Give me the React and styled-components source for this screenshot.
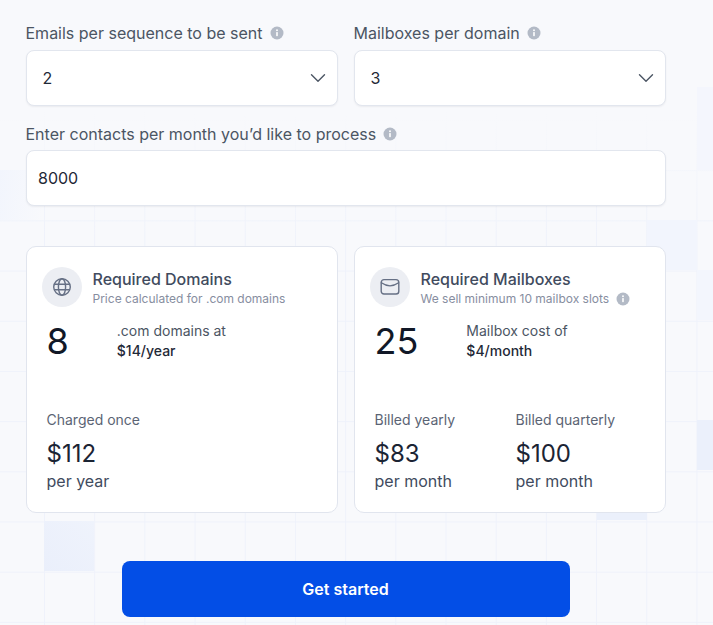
import React from "react";
import styled, { createGlobalStyle } from "styled-components";

const Global = createGlobalStyle`
  html, body { margin: 0; padding: 0; }
  body { font-family: Inter, "Liberation Sans", sans-serif; background: #f8f9fc; }
  * { box-sizing: border-box; }
`;

const cell = (x, y, color) =>
  `linear-gradient(${color}, ${color}) ${x}px ${y}px / 50px 50px no-repeat`;

const Page = styled.main`
  width: 713px;
  height: 625px;
  overflow: hidden;
  padding: 21px 47px 0 25.5px;
  display: flex;
  flex-direction: column;
  background:
    linear-gradient(100deg, #f2f5fd, #f8f9fc 95%) 0 170px / 44px 50px no-repeat,
    linear-gradient(45deg, #eaeffb, #eff3fc) 44px 521px / 50px 50px no-repeat,
    ${cell(647, 220, "#f2f5fd")},
    linear-gradient(#f3f6fd, #f3f6fd) 697px 270px / 16px 50px no-repeat,
    linear-gradient(#f4f6fd, #f4f6fd) 697px 87px / 16px 83px no-repeat,
    linear-gradient(#ebf0fb, #ebf0fb) 697px 420px / 16px 50px no-repeat,
    ${cell(597, 470, "#ebf0fb")},
    linear-gradient(#f8f9fc 110px, rgba(248, 249, 252, 0) 240px) 0 0 / 100% 240px no-repeat,
    linear-gradient(90deg, #eff2fb 1px, transparent 1px) 44px 120px / 50.2px 50.2px,
    linear-gradient(#eff2fb 1px, transparent 1px) 0 120px / 50.2px 50.2px,
    #f8f9fc;
`;

const FieldRow = styled.div`
  display: grid;
  grid-template-columns: 312px 312px;
  column-gap: 16px;
`;

const Field = styled.div`
  display: flex;
  flex-direction: column;
  margin-top: ${(p) => p.$top || 0}px;
`;

const Label = styled.label`
  display: flex;
  align-items: center;
  gap: 7px;
  height: 24px;
  margin-bottom: ${(p) => p.$gap || 4}px;
  font-size: 16px;
  line-height: 24px;
  color: #4b5563;
`;

const Info = styled.svg`
  width: 14px;
  height: 14px;
  flex: none;
  color: #b3bac6;
`;

const InfoIcon = () => (
  <Info viewBox="0 0 14 14" aria-hidden="true">
    <circle cx="7" cy="7" r="6.5" fill="currentColor" />
    <rect x="6.2" y="6" width="1.6" height="4.2" rx="0.6" fill="#fff" />
    <circle cx="7" cy="4.2" r="0.95" fill="#fff" />
  </Info>
);

const Control = styled.div`
  display: flex;
  align-items: center;
  justify-content: space-between;
  height: 56px;
  width: ${(p) => p.$width || "auto"};
  padding: 0 11px 0 ${(p) => p.$pad}px;
  background: #fff;
  border: 1px solid #e2e6ee;
  border-radius: 8px;
  box-shadow: 0 1px 2px rgba(16, 24, 40, 0.06);
  font-size: 16px;
  color: #1f2937;
`;

const Chevron = styled.svg`
  width: 16px;
  height: 16px;
  color: #4b5563;
`;

const ChevronIcon = () => (
  <Chevron viewBox="0 0 16 16" fill="none" aria-hidden="true">
    <path d="M1.5 4.8L8 11.2L14.5 4.8" stroke="currentColor" strokeWidth="1.4" strokeLinecap="round" strokeLinejoin="round" />
  </Chevron>
);

const Cards = styled.section`
  display: grid;
  grid-template-columns: 312px 312px;
  column-gap: 16px;
  margin-top: 40px;
`;

const Card = styled.article`
  display: flex;
  flex-direction: column;
  height: 267px;
  padding: 20px 19px 19px 15px;
  background: #fff;
  border: 1px solid #e1e5ee;
  border-radius: 10px;
`;

const CardHead = styled.div`
  display: flex;
  align-items: center;
  gap: 11px;
`;

const IconCircle = styled.div`
  width: 40px;
  height: 40px;
  flex: none;
  display: flex;
  align-items: center;
  justify-content: center;
  border-radius: 50%;
  background: #eceef3;
  color: #667085;
`;

const TitleBlock = styled.div`
  display: flex;
  flex-direction: column;
`;

const Title = styled.h3`
  margin: 0;
  font-size: 16px;
  font-weight: 500;
  line-height: 24px;
  color: #414b5e;
`;

const Sub = styled.p`
  display: flex;
  align-items: center;
  gap: 7px;
  margin: 0;
  font-size: 12px;
  line-height: 16px;
  color: #878e9f;
`;

const Quantity = styled.div`
  display: flex;
  align-items: center;
  gap: 48px;
  margin: 14px 0 0 5px;
`;

const Big = styled.div`
  font-size: 36px;
  line-height: 40px;
  color: #111827;
`;

const Rate = styled.div`
  font-size: 14px;
  line-height: 20px;
  color: #4b5563;
`;

const RateValue = styled.div`
  font-weight: 500;
  color: #1f2937;
`;

const Prices = styled.div`
  display: grid;
  grid-template-columns: 129px 129px;
  column-gap: 12px;
  margin-top: auto;
  padding-left: 5px;
`;

const Price = styled.div`
  display: flex;
  flex-direction: column;
`;

const PriceLabel = styled.div`
  font-size: 14px;
  line-height: 20px;
  color: #5b6474;
`;

const Amount = styled.div`
  margin-top: 9px;
  font-size: 24px;
  line-height: 30px;
  color: #1b2434;
`;

const Per = styled.div`
  font-size: 16px;
  line-height: 24px;
  color: #414b5e;
`;

const CTA = styled.button`
  align-self: flex-start;
  width: 448px;
  height: 56px;
  margin: 48px 0 0 96px;
  border: 0;
  border-radius: 8px;
  background: #034ee6;
  color: #fff;
  font: 600 16px Inter, sans-serif;
`;

const GlobeIcon = () => (
  <svg width="20" height="20" viewBox="0 0 20 20" fill="none" stroke="currentColor" strokeWidth="1.4" aria-hidden="true">
    <circle cx="10" cy="10" r="8.3" />
    <ellipse cx="10" cy="10" rx="3.6" ry="8.3" />
    <path d="M2.2 7.3H17.8M2.2 12.7H17.8" />
  </svg>
);

const MailIcon = () => (
  <svg width="20" height="20" viewBox="0 0 20 20" fill="none" stroke="currentColor" strokeWidth="1.4" aria-hidden="true">
    <rect x="1.2" y="2.6" width="17.6" height="14.4" rx="2.8" />
    <path d="M1.4 5.8C4.4 7.9 7.2 8.9 10 8.9C12.8 8.9 15.6 7.9 18.6 5.8" strokeLinecap="round" />
  </svg>
);

export default function App() {
  return (
    <>
      <Global />
      <Page>
        <FieldRow>
          <Field>
            <Label $gap={5}>Emails per sequence to be sent <InfoIcon /></Label>
            <Control $pad={16}>2<ChevronIcon /></Control>
          </Field>
          <Field>
            <Label $gap={5}>Mailboxes per domain <InfoIcon /></Label>
            <Control $pad={16}>3<ChevronIcon /></Control>
          </Field>
        </FieldRow>
        <Field $top={16}>
          <Label>Enter contacts per month you’d like to process <InfoIcon /></Label>
          <Control $pad={11.5} $width="640px">8000</Control>
        </Field>
        <Cards>
          <Card>
            <CardHead>
              <IconCircle><GlobeIcon /></IconCircle>
              <TitleBlock>
                <Title>Required Domains</Title>
                <Sub>Price calculated for .com domains</Sub>
              </TitleBlock>
            </CardHead>
            <Quantity>
              <Big>8</Big>
              <Rate>.com domains at<RateValue>$14/year</RateValue></Rate>
            </Quantity>
            <Prices>
              <Price>
                <PriceLabel>Charged once</PriceLabel>
                <Amount>$112</Amount>
                <Per>per year</Per>
              </Price>
            </Prices>
          </Card>
          <Card>
            <CardHead>
              <IconCircle><MailIcon /></IconCircle>
              <TitleBlock>
                <Title>Required Mailboxes</Title>
                <Sub>We sell minimum 10 mailbox slots <InfoIcon /></Sub>
              </TitleBlock>
            </CardHead>
            <Quantity>
              <Big>25</Big>
              <Rate>Mailbox cost of<RateValue>$4/month</RateValue></Rate>
            </Quantity>
            <Prices>
              <Price>
                <PriceLabel>Billed yearly</PriceLabel>
                <Amount>$83</Amount>
                <Per>per month</Per>
              </Price>
              <Price>
                <PriceLabel>Billed quarterly</PriceLabel>
                <Amount>$100</Amount>
                <Per>per month</Per>
              </Price>
            </Prices>
          </Card>
        </Cards>
        <CTA>Get started</CTA>
      </Page>
    </>
  );
}
